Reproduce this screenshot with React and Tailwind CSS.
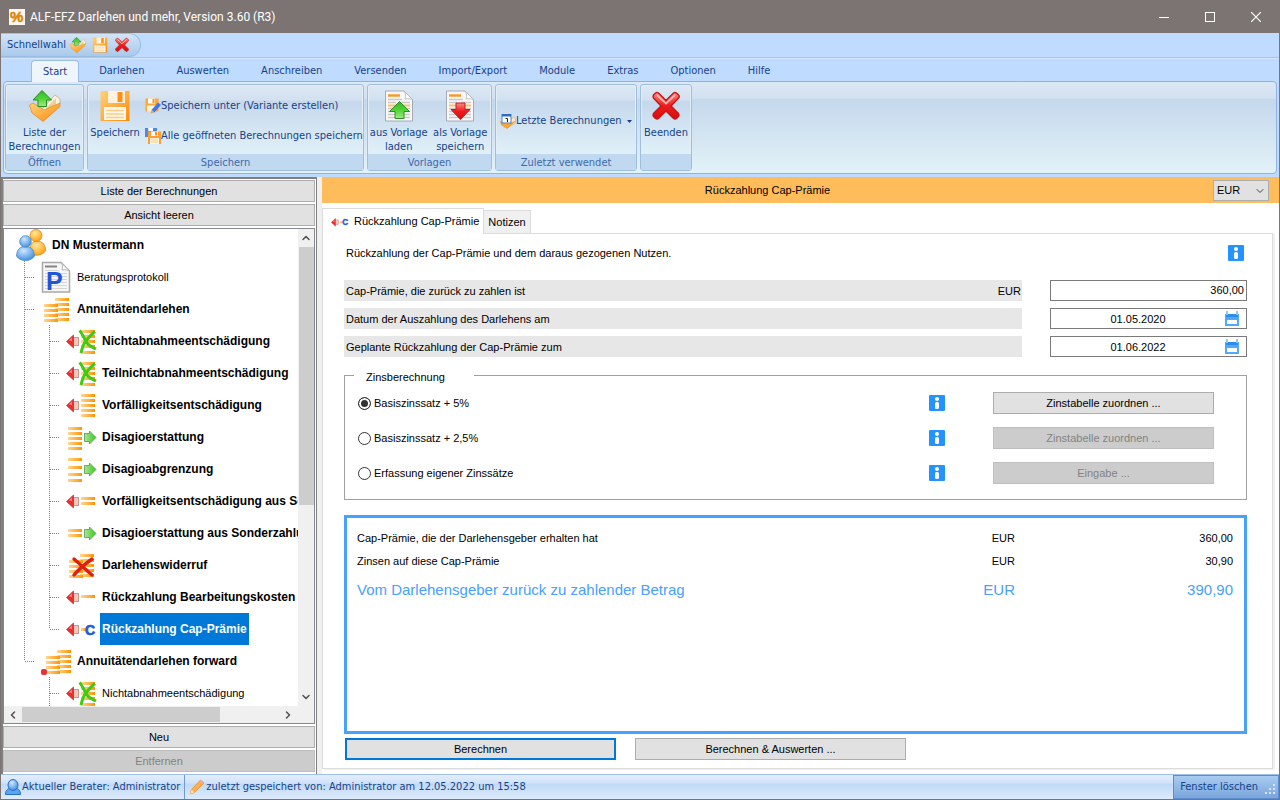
import { useState } from 'react';
import { ChevronDown, ChevronLeft, ChevronRight, ChevronUp } from 'lucide-react';

const menuTabs = [
  'Start',
  'Darlehen',
  'Auswerten',
  'Anschreiben',
  'Versenden',
  'Import/Export',
  'Module',
  'Extras',
  'Optionen',
  'Hilfe',
];

// guides: 'v' = line passes through, 't' = branch, 'l' = last branch, ' ' = empty
const treeItems = [
  { label: 'DN Mustermann', icon: 'people', guides: [], bold: true },
  { label: 'Beratungsprotokoll', icon: 'protocol', guides: ['t'] },
  { label: 'Annuitätendarlehen', icon: 'loan', guides: ['t'], bold: true },
  { label: 'Nichtabnahmeentschädigung', icon: 'refusal', guides: ['v', 't'], bold: true },
  { label: 'Teilnichtabnahmeentschädigung', icon: 'refusal', guides: ['v', 't'], bold: true },
  { label: 'Vorfälligkeitsentschädigung', icon: 'prepay', guides: ['v', 't'], bold: true },
  { label: 'Disagioerstattung', icon: 'disagio', guides: ['v', 't'], bold: true },
  { label: 'Disagioabgrenzung', icon: 'accrual', guides: ['v', 't'], bold: true },
  { label: 'Vorfälligkeitsentschädigung aus Sonderzahlung', icon: 'prepayExtra', guides: ['v', 't'], bold: true },
  { label: 'Disagioerstattung aus Sonderzahlung', icon: 'disagioExtra', guides: ['v', 't'], bold: true },
  { label: 'Darlehenswiderruf', icon: 'revoke', guides: ['v', 't'], bold: true },
  { label: 'Rückzahlung Bearbeitungskosten', icon: 'fee', guides: ['v', 't'], bold: true },
  { label: 'Rückzahlung Cap-Prämie', icon: 'cap', guides: ['v', 'l'], bold: true },
  { label: 'Annuitätendarlehen forward', icon: 'forward', guides: ['l'], bold: true },
  { label: 'Nichtabnahmeentschädigung', icon: 'refusal', guides: [' ', 't'] },
];

const interestOptions = [
  { id: 'basis5', label: 'Basiszinssatz + 5%', action: 'Zinstabelle zuordnen ...' },
  { id: 'basis25', label: 'Basiszinssatz + 2,5%', action: 'Zinstabelle zuordnen ...' },
  { id: 'custom', label: 'Erfassung eigener Zinssätze', action: 'Eingabe ...' },
];

const Gradients = () => (
  <svg width="0" height="0" className="absolute" aria-hidden="true">
    <defs>
      <linearGradient id="stripe" x1="0" x2="1" y1="0" y2="0">
        <stop offset="0" stopColor="#ffd795" />
        <stop offset="1" stopColor="#ff9500" />
      </linearGradient>
      <linearGradient id="green" x1="0" x2="0" y1="0" y2="1">
        <stop offset="0" stopColor="#35b52c" />
        <stop offset="0.5" stopColor="#4fd335" />
        <stop offset="1" stopColor="#a2ea85" />
      </linearGradient>
      <linearGradient id="greenSide" x1="0" x2="1" y1="0" y2="0">
        <stop offset="0" stopColor="#b5dfa8" />
        <stop offset="0.6" stopColor="#5fd840" />
        <stop offset="1" stopColor="#3fc42a" />
      </linearGradient>
      <linearGradient id="red" x1="0" x2="0" y1="0" y2="1">
        <stop offset="0" stopColor="#ff8a80" />
        <stop offset="0.5" stopColor="#ee1c1c" />
        <stop offset="1" stopColor="#d80d0d" />
      </linearGradient>
      <linearGradient id="orange" x1="0" x2="1" y1="0" y2="1">
        <stop offset="0" stopColor="#ffd27a" />
        <stop offset="1" stopColor="#ff8a0a" />
      </linearGradient>
      <radialGradient id="blueBall" cx="0.4" cy="0.3" r="0.8">
        <stop offset="0" stopColor="#cfe8ff" />
        <stop offset="1" stopColor="#2f86e0" />
      </radialGradient>
      <radialGradient id="orangeBall" cx="0.4" cy="0.3" r="0.8">
        <stop offset="0" stopColor="#ffe9a0" />
        <stop offset="1" stopColor="#ff9a00" />
      </radialGradient>
    </defs>
  </svg>
);

const Stripes = ({ x, ys, w = 14 }) =>
  ys.map((y) => <rect key={`${x}-${y}`} x={x} y={y} width={w} height="3" fill="url(#stripe)" />);

const RedArrow = () => (
  <g>
    <rect x="7.5" y="12.5" width="5" height="8" fill="#f6c9bd" stroke="#cf968a" />
    <path d="M0.5 16.5 L7.5 10 V23 Z" fill="#ee2c2c" stroke="#b84040" strokeWidth="0.8" />
    <path d="M3 15.500 L6 12.500 V16 Z" fill="#ff8f88" />
  </g>
);

const GreenArrow = () => (
  <path
    d="M18.5 12.5 H23.5 V10 L30 16.5 L23.5 23 V20.5 H18.5 Z"
    fill="url(#greenSide)"
    stroke="#6ea864"
    strokeWidth="1"
  />
);

const LoanStacks = ({ dx = 0 }) => (
  <g>
    <Stripes x={14 + dx} w={14} ys={[5, 10, 15, 20, 25]} />
    <Stripes x={3 + dx} w={14} ys={[11, 16, 21, 26]} />
  </g>
);

const treeIcons = {
  people: (
    <g strokeWidth="0.8">
      <path d="M14 25 C13 15 17 12 21 12 C27 12 30 17 29.500 22 C26 27 18 27 14 25 Z" fill="url(#orangeBall)" stroke="#d98a10" />
      <circle cx="20" cy="6.500" r="6" fill="url(#orangeBall)" stroke="#d98a10" />
      <path d="M0.500 27 C1 20 4 17.500 9.500 17.500 C15 17.500 18 20 18.500 27 C15 33 4 33 0.500 27 Z" fill="url(#blueBall)" stroke="#4b86c4" />
      <circle cx="9.500" cy="12.500" r="5.800" fill="url(#blueBall)" stroke="#4b86c4" />
    </g>
  ),
  protocol: (
    <g>
      <path d="M1.500 1.500 H20 L28.500 10 V31 H1.500 Z" fill="#f6f6f6" stroke="#a9a9a9" strokeWidth="1.500" />
      <path d="M20 1.500 C22 4 22 6 21 9 C24 8.500 27 9 28.500 10 Z" fill="#fff" stroke="#b5b5b5" />
      <path d="M4 5.500 H16" stroke="#858585" strokeWidth="2" />
      <path d="M4 9.500 H18 M4 12.500 H26 M4 15.500 H26 M4 18.500 H26 M4 21.500 H26 M4 24.500 H26 M4 27.500 H26" stroke="#d5d5d5" />
      <text x="5" y="28.500" fontFamily="Liberation Sans, sans-serif" fontSize="25" fontWeight="700" fill="#1f55d8">
        P
      </text>
    </g>
  ),
  loan: <LoanStacks />,
  forward: (
    <g>
      <LoanStacks dx={2} />
      <rect x="0" y="24" width="6" height="6" rx="2" fill="#e93333" />
    </g>
  ),
  refusal: (
    <g>
      <Stripes x={15} ys={[5, 10, 15, 20, 26]} />
      <RedArrow />
      <path
        d="M13.500 5.500 C17 9 18 14 21 18 C23 21 26 22 30 24 M29 6.500 C24 10 21 15 18.500 18 C16.500 21 16 24 15 28"
        stroke="#3ccc12"
        strokeWidth="3"
        fill="none"
      />
    </g>
  ),
  prepay: (
    <g>
      <Stripes x={15} ys={[5, 10, 15, 20, 25]} />
      <RedArrow />
    </g>
  ),
  disagio: (
    <g>
      <Stripes x={2} ys={[6, 11, 16, 21, 26]} />
      <GreenArrow />
    </g>
  ),
  accrual: (
    <g>
      <Stripes x={2} ys={[5, 13, 20, 26]} />
      <GreenArrow />
    </g>
  ),
  prepayExtra: (
    <g>
      <Stripes x={15} ys={[12, 17]} />
      <RedArrow />
    </g>
  ),
  disagioExtra: (
    <g>
      <Stripes x={2} ys={[12, 17]} />
      <GreenArrow />
    </g>
  ),
  revoke: (
    <g>
      <LoanStacks />
      <path d="M8 10 C14 15 20 21 26 26 M26 10 C19 15 13 20 8 26" stroke="#dd1f12" strokeWidth="3.4" fill="none" strokeLinecap="round" />
    </g>
  ),
  fee: (
    <g>
      <Stripes x={15} ys={[14]} />
      <RedArrow />
    </g>
  ),
  cap: (
    <g>
      <Stripes x={15} ys={[15]} w={5} />
      <RedArrow />
      <text x="19" y="21.500" fontFamily="Liberation Sans, sans-serif" fontSize="14" fontWeight="700" fill="#1f5be0" stroke="#1f5be0" strokeWidth="0.7">
        C
      </text>
    </g>
  ),
};

const FolderIcon = ({ size }) => (
  <svg width={size} height={size} viewBox="0 0 32 32">
    <path d="M14 18 L26 5 L31 9 V17 L14 31 Z" fill="#fbf3e4" stroke="#c9a878" strokeWidth="0.8" />
    <path d="M17 18 L27 8 V19 L14 29 Z" fill="#eecf98" />
    <path d="M0.500 15 L4 13 L15 20 L31 13 L30 17 L14 31.500 L3 23 Z" fill="url(#orange)" stroke="#e08a1a" strokeWidth="0.7" />
    <path d="M13 0.500 L22.500 10 H17.500 V16.500 H9 V10 H4 Z" fill="url(#green)" stroke="#2b8a22" />
  </svg>
);

const FloppyIcon = ({ size }) => (
  <svg width={size} height={size} viewBox="0 0 32 32">
    <path d="M1.500 1 H30.500 V31 H1.500 Z" fill="url(#orange)" />
    <rect x="9" y="1" width="17" height="12" fill="#fff2de" />
    <rect x="18.500" y="2" width="5" height="10" fill="#ff8f1c" />
    <rect x="5" y="17" width="22" height="13" fill="#fff8ec" />
    <path d="M7 20.500 H25 M7 24 H25 M7 27.500 H25" stroke="#ffcb83" strokeWidth="1.400" />
  </svg>
);

const FloppyPencilIcon = () => (
  <svg width="16" height="16" viewBox="0 0 16 16">
    <rect x="0.500" y="0.500" width="13" height="13" fill="#ffa733" />
    <rect x="3" y="0.500" width="7" height="5" fill="#fff" />
    <rect x="7.500" y="1" width="2" height="4" fill="#ff8f1c" />
    <rect x="2" y="7.500" width="9" height="6" fill="#fff4df" />
    <path d="M6.500 12 L13 4.500 L16 7 L9.500 14.500 Z" fill="#3f78e6" />
    <path d="M5.500 15.500 L6.500 12 L9.500 14.500 Z" fill="#e9a95a" />
  </svg>
);

const FloppiesIcon = () => (
  <svg width="16" height="16" viewBox="0 0 16 16">
    <path d="M0 0 H3 V3 H7 V0 H12 V9 H0 Z" fill="#4f88e4" />
    <rect x="4" y="0" width="4" height="3" fill="#fff" />
    <rect x="3" y="3.500" width="13" height="12.500" fill="#ff9d2e" />
    <rect x="6" y="3.500" width="7" height="4.500" fill="#fff" />
    <rect x="10" y="4" width="2" height="3.500" fill="#ff8f1c" />
    <rect x="5" y="10" width="9" height="6" fill="#fff4df" />
    <path d="M6 12 H13 M6 14 H13" stroke="#ffcb83" />
  </svg>
);

const TemplateIcon = ({ down }) => (
  <svg width="32" height="32" viewBox="0 0 32 32">
    <path d="M2.500 1 H21 L29.500 9.500 V31 H2.500 Z" fill="#f8f8f8" stroke="#a5aab2" />
    <path d="M21 1 C23 4 23 6 22 9 C25 8.500 28 9 29.500 9.500 Z" fill="#fff" stroke="#b0b5bc" strokeWidth="0.8" />
    <path d="M5 5.500 H17" stroke="#ff9424" strokeWidth="2.400" />
    <path d="M5 9.500 H19 M5 12.500 H13 M17 12.500 H27 M5 18.500 H27 M5 21.500 H27 M5 24.500 H27 M5 27.500 H27" stroke="#c9c9c9" strokeWidth="1.400" />
    <path d="M5 15.500 H27" stroke="#ffbf66" strokeWidth="2" />
    {down ? (
      <path d="M12 13 H21 V19.500 H26 L16.500 29.500 L7 19.500 H12 Z" fill="url(#red)" stroke="#b82020" />
    ) : (
      <path d="M16.500 11.500 L26.500 21.500 H21 V28.500 H12 V21.500 H6.500 Z" fill="url(#green)" stroke="#2f8f24" />
    )}
  </svg>
);

const CloseIcon = ({ size }) => (
  <svg width={size} height={size} viewBox="0 0 32 32">
    <path
      d="M8.500 3 L16 10.500 L23.500 3 Q25 2 26.500 3 L28.500 5 Q30 6.500 28.500 8 L21 16 L28.500 23.500 Q29.500 25 28.500 26.500 L26.500 28.500 Q25 29.500 23.500 28.500 L16 21 L8.500 28.500 Q7 29.500 5.500 28.500 L3.500 26.500 Q2.500 25 3.500 23.500 L11 16 L3.500 8 Q2.500 6.500 3.500 5 L5.500 3 Q7 2 8.500 3 Z"
      fill="url(#red)"
      stroke="#c41717"
      strokeWidth="1.400"
    />
    <path d="M7 5 L16 13.500 L25 5" stroke="#ffb7b0" strokeWidth="1.800" fill="none" />
  </svg>
);

const RecentIcon = () => (
  <svg width="16" height="16" viewBox="0 0 16 16">
    <path d="M8 9 L13.500 4 L15.500 6 V10 L7 15 Z" fill="#fbe9c8" stroke="#c9a878" strokeWidth="0.600" />
    <path d="M0.500 8.500 L7 11.500 L15 8.500 L7 15.500 L1.500 12 Z" fill="#ffa733" stroke="#dd8518" strokeWidth="0.500" />
    <rect x="2" y="1.500" width="9" height="8.500" fill="#fff" stroke="#4d7fc4" />
    <rect x="2" y="1" width="9" height="2.500" fill="#2f6cc4" />
    <path d="M5.500 5.500 H7.500 V9" stroke="#222" fill="none" />
  </svg>
);

const InfoIcon = () => (
  <svg width="16" height="16" viewBox="0 0 16 16">
    <rect width="16" height="16" rx="1" fill="#2492ff" />
    <circle cx="8" cy="4" r="2" fill="#fff" />
    <rect x="6" y="7" width="4" height="7" rx="1.500" fill="#fff" />
  </svg>
);

const CalendarIcon = () => (
  <svg width="14" height="15" viewBox="0 0 14 15">
    <rect x="0" y="3" width="14" height="12" fill="#54a8fc" />
    <rect x="1" y="3" width="12" height="3" fill="#2a8cf2" />
    <rect x="2" y="9" width="10" height="4" fill="#fff" />
    <rect x="1" y="0" width="2" height="4" fill="#8fc6ff" />
    <rect x="11" y="0" width="2" height="4" fill="#8fc6ff" />
  </svg>
);

const CapTabIcon = () => (
  <svg width="19" height="12" viewBox="0 0 32 20">
    <g transform="translate(0 -6)">{treeIcons.cap}</g>
  </svg>
);

const TreeGuide = ({ kind }) => (
  <svg width="25" height="32" className="shrink-0">
    {kind !== ' ' && (
      <path d={kind === 'l' ? 'M8.500 0 V16' : 'M8.500 0 V32'} stroke="#808080" strokeDasharray="1 1" />
    )}
    {(kind === 't' || kind === 'l') && <path d="M9 16.500 H18" stroke="#808080" strokeDasharray="1 1" />}
  </svg>
);

const TreeItem = ({ item, selected, onSelect }) => (
  <li className="flex h-8 shrink-0 items-center pl-3">
    {item.guides.map((kind, i) => (
      <TreeGuide key={i} kind={kind} />
    ))}
    <svg width="32" height="32" viewBox="0 0 32 32" className="shrink-0">
      {treeIcons[item.icon]}
    </svg>
    <button
      onClick={onSelect}
      className={`ml-0.5 h-8 px-0.5 whitespace-nowrap ${item.bold ? 'text-xs font-bold' : 'text-[11px]'} ${
        selected ? 'bg-[#0078d7] text-white' : 'text-black'
      }`}
    >
      {item.label}
    </button>
  </li>
);

const RibbonGroup = ({ title, className, children }) => (
  <section
    className={`flex h-[87px] flex-col rounded-[3px] border border-[#9ebfe0] bg-[linear-gradient(#dde8f4_0%,#d2e0f0_18%,#c5d8ec_19%,#e0f0f8_80%)] shadow-[inset_0_0_0_1px_#e3edf8] ${className}`}
  >
    <div className="flex flex-1 items-start pt-[5px]">{children}</div>
    <h2 className="h-4 bg-[#c0d8f0] text-center leading-[18px] text-[#3e6aaa]">{title}</h2>
  </section>
);

const BigButton = ({ icon, lines, className = '' }) => (
  <button className={`flex flex-col items-center gap-1 whitespace-nowrap ${className}`}>
    {icon}
    <span className="leading-[14px]">
      {lines.map((line) => (
        <span key={line} className="block">
          {line}
        </span>
      ))}
    </span>
  </button>
);

const GrayButton = ({ children, className = '', disabled, primary }) => {
  let look = 'border border-[#adadad] bg-[#e1e1e1] text-black';
  if (primary) look = 'border-2 border-[#0078d7] bg-[#e1e1e1] text-black';
  if (disabled) look = 'border border-[#bfbfbf] bg-[#cccccc] text-[#838383]';

  return (
    <button disabled={disabled} className={`h-[22px] text-[11px] leading-4 ${look} ${className}`}>
      {children}
    </button>
  );
};

const DateField = ({ id, label, value, onChange }) => (
  <div className="flex h-[21px] items-stretch gap-7">
    <label htmlFor={id} className="flex-1 bg-[#e7e7e7] pl-0.5 leading-[22px]">
      {label}
    </label>
    <div className="flex w-[197px] items-center border border-[#7a7a7a] bg-white">
      <input
        id={id}
        type="text"
        value={value}
        onChange={(e) => onChange(e.target.value)}
        className="h-full min-w-0 flex-1 text-center outline-none"
      />
      <button aria-label="Kalender" className="mr-[7px] flex">
        <CalendarIcon />
      </button>
    </div>
  </div>
);

const App = () => {
  const [activeMenu, setActiveMenu] = useState('Start');
  const [selectedIndex, setSelectedIndex] = useState(12);
  const [currency, setCurrency] = useState('EUR');
  const [premium, setPremium] = useState('360,00');
  const [payoutDate, setPayoutDate] = useState('01.05.2020');
  const [repayDate, setRepayDate] = useState('01.06.2022');
  const [interest, setInterest] = useState('basis5');

  return (
    <div className="flex h-screen flex-col overflow-hidden border-x border-b border-[#7b7473] bg-[#bfdbff] font-['Liberation_Sans',Arial,sans-serif] text-[11px] text-black">
      <Gradients />

      {/* Title bar */}
      <header className="flex h-[33px] shrink-0 items-center bg-[#7b7473] pl-2 font-['Roboto',sans-serif] text-xs text-white">
        <svg width="16" height="16" viewBox="0 0 16 16">
          <rect width="16" height="16" fill="#fdf8ee" />
          <text x="1" y="13" fontFamily="Liberation Sans, sans-serif" fontSize="15" fontWeight="700" fill="#d98608" stroke="#d98608" strokeWidth="0.500">
            %
          </text>
        </svg>
        <h1 className="ml-[5px] flex-1">ALF-EFZ Darlehen und mehr, Version 3.60 (R3)</h1>
        <button aria-label="Minimieren" className="flex w-[46px] justify-center">
          <svg width="10" height="10">
            <path d="M0 5.500 H10" stroke="#fff" />
          </svg>
        </button>
        <button aria-label="Maximieren" className="flex w-[46px] justify-center">
          <svg width="10" height="10">
            <rect x="0.500" y="0.500" width="9" height="9" fill="none" stroke="#fff" />
          </svg>
        </button>
        <button aria-label="Schließen" className="flex w-[46px] justify-center">
          <svg width="10" height="10">
            <path d="M0 0 L10 10 M10 0 L0 10" stroke="#fff" strokeWidth="1.200" />
          </svg>
        </button>
      </header>

      {/* Quick access and ribbon */}
      <div className="shrink-0 font-['DejaVu_Sans_Condensed','DejaVu_Sans',sans-serif] text-[11px] text-[#15428b]">
        <div className="flex h-[25px] border-b border-[#a5c5ea]">
          <div className="flex items-center rounded-r-full border border-l-0 border-[#9abde4] bg-linear-to-b from-[#d3e4f7] to-[#a9c9ec] pr-2.5 pl-1.5">
            <span className="mr-1">Schnellwahl</span>
            <button aria-label="Liste öffnen" className="mr-1.5">
              <FolderIcon size={16} />
            </button>
            <button aria-label="Speichern" className="mr-1.5">
              <FloppyIcon size={16} />
            </button>
            <button aria-label="Beenden">
              <CloseIcon size={16} />
            </button>
          </div>
        </div>

        <nav className="flex h-[23px] items-end gap-2 border-t border-[#d5e6fb] pl-[30px]">
          {menuTabs.map((tab) => (
            <button
              key={tab}
              onClick={() => setActiveMenu(tab)}
              className={`h-[21px] rounded-t border border-b-0 px-[11px] pt-px ${
                tab === activeMenu ? 'relative -mb-px h-[22px] border-[#9abde4] bg-[#eef5fd]' : 'border-transparent'
              }`}
            >
              {tab}
            </button>
          ))}
        </nav>

        <div className="mx-0.5 mb-[3px] flex gap-[3px] rounded border border-[#8db2e3] bg-[linear-gradient(#dde8f4_0%,#d2e0f0_18%,#c5d8ec_19%,#e2f2f8_100%)] px-px py-0.5">
          <RibbonGroup title="Öffnen" className="w-[79px]">
            <BigButton className="w-full" icon={<FolderIcon size={32} />} lines={['Liste der', 'Berechnungen']} />
          </RibbonGroup>
          <RibbonGroup title="Speichern" className="w-[277px]">
            <BigButton className="w-[54px]" icon={<FloppyIcon size={32} />} lines={['Speichern']} />
            <div className="flex flex-col items-start gap-3.5 pt-2 pl-[3px]">
              <button className="flex h-4 items-center whitespace-nowrap">
                <FloppyPencilIcon />
                Speichern unter (Variante erstellen)
              </button>
              <button className="flex h-4 items-center whitespace-nowrap">
                <FloppiesIcon />
                Alle geöffneten Berechnungen speichern
              </button>
            </div>
          </RibbonGroup>
          <RibbonGroup title="Vorlagen" className="w-[125px]">
            <BigButton className="w-1/2" icon={<TemplateIcon />} lines={['aus Vorlage', 'laden']} />
            <BigButton className="w-1/2" icon={<TemplateIcon down />} lines={['als Vorlage', 'speichern']} />
          </RibbonGroup>
          <RibbonGroup title="Zuletzt verwendet" className="w-[142px]">
            <button className="mt-[23px] ml-1 flex h-4 items-center whitespace-nowrap">
              <RecentIcon />
              Letzte Berechnungen
              <svg width="5" height="3" className="ml-[5px]">
                <path d="M0 0 H5 L2.500 3 Z" fill="#15428b" />
              </svg>
            </button>
          </RibbonGroup>
          <RibbonGroup title="" className="w-[52px]">
            <BigButton className="w-full" icon={<CloseIcon size={32} />} lines={['Beenden']} />
          </RibbonGroup>
        </div>
      </div>

      <div className="flex min-h-0 flex-1 bg-[#f0f0f0]">
        {/* Navigation tree */}
        <aside className="flex w-[316px] shrink-0 flex-col gap-0.5 border-t-2 border-r border-l-2 border-[#808080] bg-white pt-px pb-0.5 pr-px">
          <GrayButton>Liste der Berechnungen</GrayButton>
          <GrayButton>Ansicht leeren</GrayButton>
          <div className="flex min-h-0 flex-1 flex-col border border-[#828790]">
            <div className="flex min-h-0 flex-1">
              <ul className="flex min-w-0 flex-1 flex-col overflow-hidden">
                {treeItems.map((item, i) => (
                  <TreeItem
                    key={i}
                    item={item}
                    selected={i === selectedIndex}
                    onSelect={() => setSelectedIndex(i)}
                  />
                ))}
              </ul>
              <div className="flex w-4 shrink-0 flex-col items-center bg-[#f0f0f0] text-[#505050]">
                <ChevronUp size={12} strokeWidth={3} className="my-[3px]" />
                <div className="h-[258px] w-[15px] bg-[#cdcdcd]" />
                <ChevronDown size={12} strokeWidth={3} className="mt-auto mb-[3px]" />
              </div>
            </div>
            <div className="flex h-[17px] shrink-0 items-center bg-[#f0f0f0] pr-[17px] text-[#505050]">
              <ChevronLeft size={12} strokeWidth={3} className="mx-[3px]" />
              <div className="h-[15px] w-[198px] bg-[#cdcdcd]" />
              <ChevronRight size={12} strokeWidth={3} className="mr-[3px] ml-auto" />
            </div>
          </div>
          <GrayButton>Neu</GrayButton>
          <GrayButton disabled>Entfernen</GrayButton>
        </aside>

        {/* Calculation form */}
        <main className="ml-[5px] flex min-w-0 flex-1 flex-col bg-white">
          <div className="flex h-[26px] shrink-0 items-center bg-[#ffbc5a] pr-2.5">
            <h2 className="flex-1 text-center">Rückzahlung Cap-Prämie</h2>
            <div className="relative">
              <select
                aria-label="Währung"
                value={currency}
                onChange={(e) => setCurrency(e.target.value)}
                className="h-[21px] w-14 appearance-none border border-[#adadad] bg-[#e1e1e1] pl-[3px]"
              >
                <option>EUR</option>
                <option>CHF</option>
              </select>
              <ChevronDown size={12} className="pointer-events-none absolute top-[5px] right-[3px] text-[#404040]" />
            </div>
          </div>

          <div className="flex shrink-0 items-end pt-[5px]">
            <button className="relative -mb-px flex h-[26px] items-center border border-b-0 border-[#dcdcdc] bg-white pr-1 pl-2">
              <CapTabIcon />
              <span className="ml-1">Rückzahlung Cap-Prämie</span>
            </button>
            <button className="h-[23px] border border-b-0 border-l-0 border-[#dcdcdc] bg-[#f0f0f0] px-1">Notizen</button>
          </div>

          <div className="mr-1.5 mb-[5px] flex min-h-0 flex-1 flex-col border border-[#dcdcdc] pt-[11px] pr-[25px] pb-2 pl-[21px] shadow-[2px_1px_0_#f0f0f0]">
            <div className="flex h-4 shrink-0 items-center justify-between pr-[3px] pl-0.5">
              <p>Rückzahlung der Cap-Prämie und dem daraus gezogenen Nutzen.</p>
              <button aria-label="Info">
                <InfoIcon />
              </button>
            </div>

            <div className="mt-[19px] flex shrink-0 flex-col gap-[7px]">
              <div className="flex h-[21px] items-stretch gap-7">
                <label
                  htmlFor="premium"
                  className="flex flex-1 justify-between bg-[#e7e7e7] pr-px pl-0.5 leading-[22px]"
                >
                  <span>Cap-Prämie, die zurück zu zahlen ist</span>
                  <span>EUR</span>
                </label>
                <input
                  id="premium"
                  type="text"
                  value={premium}
                  onChange={(e) => setPremium(e.target.value)}
                  className="w-[197px] border border-[#7a7a7a] pr-0.5 text-right outline-none"
                />
              </div>
              <DateField
                id="payout"
                label="Datum der Auszahlung des Darlehens am"
                value={payoutDate}
                onChange={setPayoutDate}
              />
              <DateField
                id="repay"
                label="Geplante Rückzahlung der Cap-Prämie zum"
                value={repayDate}
                onChange={setRepayDate}
              />
            </div>

            <fieldset className="mt-[9px] shrink-0 border border-[#a0a0a0] pr-8 pb-[15px] pl-[13px]">
              <legend className="-ml-1 h-[18px] w-[120px] pl-3 leading-[22px]">Zinsberechnung</legend>
              <div className="mt-2 flex flex-col gap-[13px]">
                {interestOptions.map((option) => (
                  <div key={option.id} className="flex h-[22px] items-center">
                    <label className="flex flex-1 items-center gap-[3px]">
                      <input
                        type="radio"
                        name="interest"
                        checked={interest === option.id}
                        onChange={() => setInterest(option.id)}
                        className="size-[13px] appearance-none rounded-full border border-[#333333] bg-white checked:bg-[#333333] checked:shadow-[inset_0_0_0_2px_white]"
                      />
                      {option.label}
                    </label>
                    <button aria-label="Info" className="mr-12">
                      <InfoIcon />
                    </button>
                    <GrayButton className="w-[221px]" disabled={interest !== option.id}>
                      {option.action}
                    </GrayButton>
                  </div>
                ))}
              </div>
            </fieldset>

            <div className="mt-[15px] min-h-0 flex-1 border-[3px] border-[#48a0ff] pt-[9px] pr-[11px] pl-2.5">
              <table className="w-full">
                <tbody>
                  <tr className="h-[23px]">
                    <td>Cap-Prämie, die der Darlehensgeber erhalten hat</td>
                    <td className="text-right">EUR</td>
                    <td className="w-[218px] text-right">360,00</td>
                  </tr>
                  <tr className="h-[23px]">
                    <td>Zinsen auf diese Cap-Prämie</td>
                    <td className="text-right">EUR</td>
                    <td className="text-right">30,90</td>
                  </tr>
                  <tr className="h-[34px] text-[15px] text-[#48a0ff]">
                    <td>Vom Darlehensgeber zurück zu zahlender Betrag</td>
                    <td className="text-right">EUR</td>
                    <td className="text-right">390,90</td>
                  </tr>
                </tbody>
              </table>
            </div>

            <div className="mt-1 flex shrink-0 gap-[19px] pl-px">
              <GrayButton primary className="w-[271px]">
                Berechnen
              </GrayButton>
              <GrayButton className="w-[271px]">Berechnen &amp; Auswerten ...</GrayButton>
            </div>
          </div>
        </main>
      </div>

      {/* Status bar */}
      <footer className="flex h-[25px] shrink-0 items-center border-t border-[#9dbfe8] bg-[linear-gradient(#e3eefc_0%,#d0e2f9_35%,#bfd9f7_36%,#deebfc_100%)] font-['DejaVu_Sans_Condensed','DejaVu_Sans',sans-serif] text-[11px] text-[#15428b]">
        <div className="flex h-full items-center border-r border-[#6f9bd2] pr-1 pl-1">
          <svg width="16" height="16" viewBox="0 0 16 16" className="mr-px">
            <path d="M0.500 15.500 C0.500 11 3 9.500 5 9.500 H11 C13 9.500 15.500 11 15.500 15.500 Z" fill="#58a6f0" stroke="#2b6fc0" />
            <ellipse cx="8" cy="6" rx="5" ry="5.500" fill="url(#blueBall)" stroke="#2b6fc0" />
          </svg>
          Aktueller Berater: Administrator
        </div>
        <div className="flex h-full flex-1 items-center pl-1">
          <svg width="16" height="16" viewBox="0 0 16 16" className="mr-px">
            <path d="M1 15 L2.500 10.500 L11.500 1 L15 4 L5.500 13.500 Z" fill="#ffae4a" stroke="#e08a2a" strokeWidth="0.700" />
            <path d="M1 15 L2.500 10.500 L5.500 13.500 Z" fill="#f4dcb4" />
            <path d="M10.500 2 L14 5 L15 4 L11.500 1 Z" fill="#f3a6a0" />
          </svg>
          zuletzt gespeichert von: Administrator am 12.05.2022 um 15:58
        </div>
        <button className="flex h-full items-center border border-[#5f8dca] bg-linear-to-b from-[#a9ccf0] to-[#7aa5dc] pr-0.5 pl-1.5">
          Fenster löschen
          <svg width="12" height="12" className="mt-1.5 ml-1.5">
            <path d="M9 1 h2 M5 5 h2 M9 5 h2 M1 9 h2 M5 9 h2 M9 9 h2" stroke="#d6e6fa" strokeWidth="2" />
          </svg>
        </button>
      </footer>
    </div>
  );
};

export default App;
